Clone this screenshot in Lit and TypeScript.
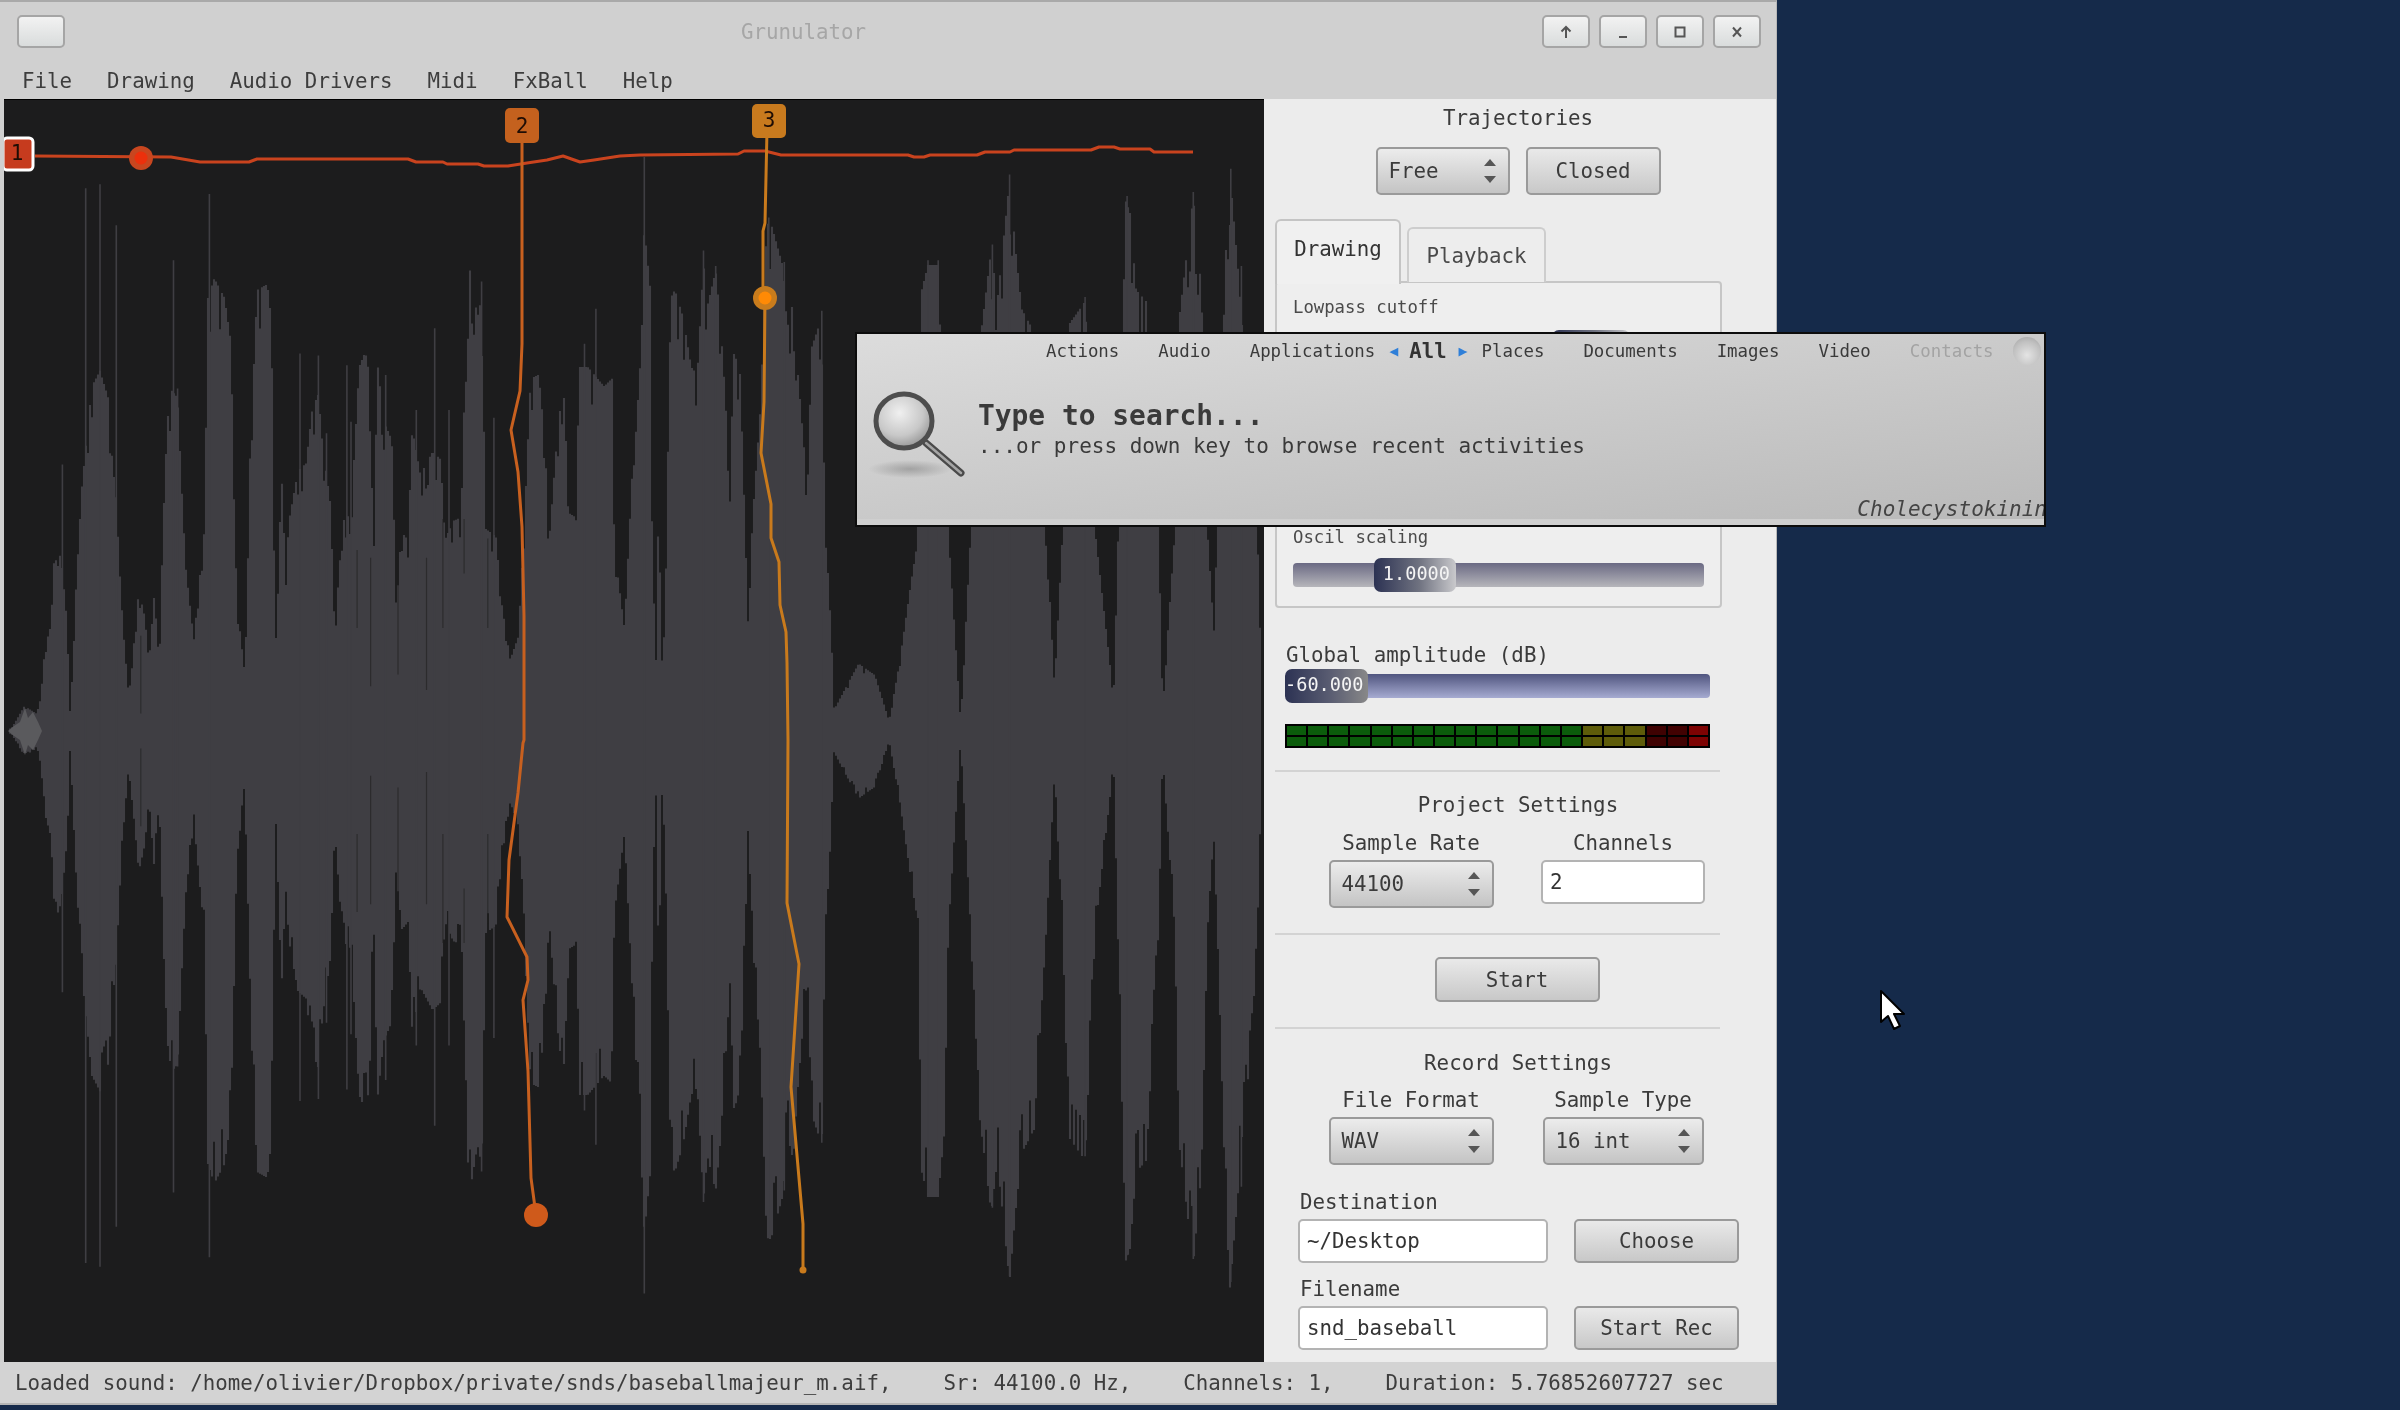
import { LitElement, html, css, svg } from "lit";
import { customElement } from "lit/decorators.js";

const ENV_A: number[][] = [[10,1545],[30,1535],[60,1480],[90,1500],[100,1460],[110,1330],[125,1270],[135,1050],[150,1100],[165,1270],[172,1510],[185,1200],[200,920],[225,650],[245,610],[265,680],[275,840],[290,1000],[300,1260],[315,1450],[330,1300],[340,1180],[355,1250],[365,1370],[378,1190],[390,1370],[400,1000],[410,740],[420,660],[435,680],[445,910],[455,1120],[475,1310],[490,1140],[503,1000],[507,430],[525,370],[550,420],[565,530],[572,820],[580,1210],[600,1400],[612,850],[630,400],[655,385],[665,480],[670,920],[675,1340],[690,880],[700,1140],[708,1000],[730,870],[750,850],[765,710],[780,670],[790,800],[810,960],[820,1290],[840,1000],[860,980],[880,600],[895,560],[905,620],[915,1080],[925,590],[940,740],[960,790],[970,1180],[985,1030],[1000,1050],[1010,760],[1030,880],[1060,820],[1080,840],[1090,1050],[1110,1000],[1130,990],[1140,590],[1150,340],[1170,470],[1180,420],[1190,1020],[1215,1040],[1230,1220],[1250,1360],[1270,1300],[1285,1000],[1300,630],[1320,620],[1335,790],[1345,1060],[1365,780],[1380,640],[1395,980],[1410,990],[1420,600],[1440,600],[1480,650],[1500,630],[1505,1070],[1530,1280],[1555,750]];
const ENV_B: number[][] = [[25,500],[35,240],[50,400],[55,1100],[65,1400],[70,900],[80,1450],[90,1000],[100,420],[110,400],[130,470],[150,600],[165,620],[180,330],[190,440],[210,350],[220,460],[230,620],[245,890],[255,560],[270,620],[290,1290],[300,1000],[320,700],[335,230],[345,225],[375,340],[385,500],[400,430],[410,600],[435,920],[445,550],[470,470],[478,1040],[490,1200],[500,1490],[530,1430],[560,1370],[600,1400],[635,1520],[660,1370],[690,1150],[705,1050],[715,400],[730,335],[755,335],[770,500],[780,1030],[810,1520],[835,1030],[850,600],[885,295],[900,430],[930,115],[945,300],[960,450],[990,510],[1020,1030],[1040,1430],[1060,1030],[1075,490],[1115,430],[1140,1030],[1185,1460],[1195,1030],[1215,170],[1225,200],[1240,400],[1265,430],[1295,1030],[1305,1480],[1335,1030],[1345,480],[1380,160],[1400,400],[1415,1030],[1430,1280],[1440,1000],[1460,300],[1470,100],[1490,350],[1500,500],[1530,800],[1545,1300]];
const SPIKES_A: number[][] = [[210,150],[245,140],[285,245],[153,860],[425,335],[435,665],[513,165],[735,575],[780,580],[850,605],[1065,510],[1100,720],[1460,460],[1432,550],[1020,720],[800,780],[945,630],[1180,390],[860,750],[1210,740]];
const SPIKES_B: number[][] = [[35,70],[180,310],[210,350],[340,225],[378,340],[470,465],[730,335],[755,335],[888,295],[930,115],[1115,430],[1218,170],[1380,160],[1472,100],[1498,350]];
const NOTCHES_A: number[][] = [[908,1100,1430],[975,1100,1400],[1045,1100,1440],[875,1080,1280],[1195,1050,1280],[1137,1000,1140],[1085,1000,1280],[345,1300,1500]];

const envelope = [
  ...ENV_A.map(([x, y]) => [x / 2.45, (1545 - y) / 2.57]),
  ...ENV_B.map(([x, y]) => [630 + x / 2.45, (1545 - y) / 2.57]),
].sort((a, b) => a[0] - b[0]);

function ampAt(x: number): number {
  for (let i = 1; i < envelope.length; i++) {
    const [x0, a0] = envelope[i - 1];
    const [x1, a1] = envelope[i];
    if (x <= x1) return a0 + ((a1 - a0) * (x - x0)) / Math.max(x1 - x0, 0.01);
  }
  return 0;
}

function wavePaths() {
  let seed = 71;
  const rnd = () => ((seed = (seed * 1103515 + 12345) % 2147483647) / 2147483647);
  const cy = 731;
  let body = "";
  for (let x = 10; x < 1264; x += 2) {
    const a = ampAt(x);
    const t = a * (rnd() < 0.25 ? 0.9 : 0.99);
    const b = a * (rnd() < 0.25 ? 0.9 : 0.99);
    body += `M${x} ${(cy - t).toFixed(1)}V${(cy + b).toFixed(1)}`;
  }
  let spikes = "";
  const add = (x: number, y: number) => {
    const a = (1545 - y) / 2.57;
    spikes += `M${x.toFixed(1)} ${(cy - a).toFixed(1)}V${(cy + a * 0.98).toFixed(1)}`;
  };
  SPIKES_A.forEach(([x, y]) => add(x / 2.45, y));
  SPIKES_B.forEach(([x, y]) => add(630 + x / 2.45, y));
  let notches = "";
  NOTCHES_A.forEach(([x, y0, y1]) => {
    const px = x / 2.45;
    const a0 = (1545 - y0) / 2.57;
    const a1 = (1545 - y1) / 2.57;
    notches += `M${px.toFixed(1)} ${(cy - a0).toFixed(1)}V${(cy - a1).toFixed(1)}M${px.toFixed(1)} ${(cy + a1).toFixed(1)}V${(cy + a0).toFixed(1)}`;
  });
  return { body, spikes, notches };
}

const LINE1 = "35,156 171,157 200,162 249,162 257,159 408,159 416,162 443,162 447,164 478,164 484,166 508,166 527,163 547,160 563,156 580,162 594,160 620,156 640,155 738,154 744,151 765,151 781,155 908,155 914,157 924,157 930,155 977,155 985,152 1010,152 1014,150 1091,150 1099,147 1114,147 1120,149 1150,149 1154,152 1193,152";
const LINE2 = "522,130 522,344 520,391 511,430 518,472 522,527 524,616 524,740 523,743 518,793 509,860 507,917 527,957 528,980 523,1000 528,1071 531,1178 536,1215";
const LINE3 = "767,130 765,223 763,231 763,286 765,297 764,402 761,453 771,504 771,538 779,562 780,605 786,632 787,663 788,740 787,903 799,964 791,1087 803,1224 803,1270";

const arrows = svg`<svg class="arrows" viewBox="0 0 14 28" width="14" height="28"><path d="M7 2 13 9H1Z"/><path d="M7 26 1 19H13Z"/></svg>`;

@customElement("app-root")
export class AppRoot extends LitElement {
  static styles = css`
    :host { display: block; position: relative; width: 2400px; height: 1410px; overflow: hidden; background: #152a4a; font-family: "DejaVu Sans Mono", "Liberation Mono", monospace; font-size: 20.8px; color: #3b3b3b; }
    .window { width: 1777px; height: 1405px; display: flex; flex-direction: column; background: #d0d0d0; box-sizing: border-box; border-top: 2px solid #a9a9a9; border-right: 1px solid #b8b8b8; filter: blur(0.45px); }
    .titlebar { height: 61px; flex: none; display: flex; align-items: flex-start; padding: 13px 15px 0 17px; box-sizing: border-box; }
    .tbtn { width: 48px; height: 33px; box-sizing: border-box; border: 2px solid #a5a5a5; border-radius: 5px; background: linear-gradient(#f2f2f2, #d9dcdc); display: flex; align-items: center; justify-content: center; flex: none; }
    .tbtn svg { fill: none; stroke: #555; stroke-width: 2; }
    .title { flex: 1; text-align: center; color: #a6a6a6; line-height: 34px; font-size: 20.8px; }
    .tbtns { display: flex; gap: 9px; }
    .menu { height: 36px; flex: none; display: flex; gap: 35px; padding-left: 22px; align-items: center; color: #3d3d3d; }
    .main { flex: 1; display: flex; min-height: 0; padding-left: 4px; }
    .canvas { width: 1260px; height: 1263px; background: #1c1c1d; flex: none; border-top: 0; box-shadow: inset 0 1px 0 #000; }
    .canvas svg { display: block; }
    .body-w { fill: none; stroke: #3f3e43; stroke-width: 2.1; }
    .spike-w { fill: none; stroke: #3f3e43; stroke-width: 1.6; }
    .notch-w { fill: none; stroke: #1f1f20; stroke-width: 1.2; opacity: .6; }
    .start-w { fill: #5a5a5d; }
    .traj { fill: none; stroke-width: 3; stroke-linejoin: round; }
    .h-text { font-family: "DejaVu Sans Mono", monospace; font-size: 21px; fill: #1f0d05; text-anchor: middle; }
    .panel { flex: 1; background: #ececec; padding-right: 4px; }
    .center { text-align: center; height: 24px; line-height: 24px; }
    .h-first { height: 38px; line-height: 38px; }
    .row-c { display: flex; justify-content: center; gap: 16px; margin-top: 10px; }
    .combo { height: 48px; box-sizing: border-box; border: 2px solid #9a9a9a; border-radius: 5px; background: linear-gradient(#ececec, #c4c4c4); display: flex; align-items: center; justify-content: space-between; padding: 0 11px; flex: none; }
    .arrows { fill: #565656; }
    .btn { height: 48px; box-sizing: border-box; border: 2px solid #9a9a9a; border-radius: 5px; background: linear-gradient(#e9e9e9, #c8c8c8); display: flex; align-items: center; justify-content: center; flex: none; }
    .tabs { display: flex; align-items: flex-end; gap: 6px; margin: 24px 0 0 11px; height: 63px; position: relative; z-index: 1; }
    .tab { box-sizing: border-box; border: 2px solid #cdcdcd; border-bottom: none; border-radius: 6px 6px 0 0; display: flex; justify-content: center; align-items: center; }
    .tab.on { width: 126px; height: 63px; background: #f0f0f0; padding-bottom: 8px; color: #333; border-color: #c4c4c4; margin-bottom: -2px; height: 65px; }
    .tab.off { width: 139px; height: 55px; background: #ededed; color: #4a4a4a; }
    .box { width: 447px; height: 327px; box-sizing: border-box; margin: -1px 0 0 11px; border: 2px solid #c6c6c6; border-radius: 4px; padding: 13px 16px 0; background: #eee; }
    .small { font-size: 17.3px; line-height: 22px; height: 22px; color: #4a4a4a; }
    .slider { position: relative; height: 34px; }
    .track { height: 24px; margin-top: 5px; box-sizing: border-box; border-radius: 4px; position: absolute; left: 0; right: 0; background: linear-gradient(#6a6983, #b6b6bb); }
    .thumb { position: absolute; top: 0; height: 34px; border-radius: 7px; box-sizing: border-box; color: #f4f4f4; font-size: 18.6px; line-height: 32px; text-align: right; padding-right: 6px; white-space: nowrap; background: linear-gradient(90deg, #2c3253, #6f7280 55%, #c9c9cc); }
    .s-low { margin-top: 12px; }
    .covered { height: 162px; }
    .s-osc { margin-top: 10px; }
    .amp-label { margin: 36px 0 0 22px; height: 22px; line-height: 22px; }
    .amp { margin: 3px 0 0 21px; width: 425px; }
    .amp .track { background: linear-gradient(#50557f, #a6abd1); }
    .amp .thumb { background: linear-gradient(90deg, #2c3253, #5a5d72 55%, #888); padding-right: 5px; }
    .vu { margin: 21px 0 0 21px; width: 425px; height: 24px; box-sizing: border-box; background: #000; padding: 2px; display: grid; grid-template-columns: repeat(20, 1fr); gap: 2px; }
    .seg { background: linear-gradient(var(--c) 46%, #000 46%, #000 54%, var(--c) 54%); }
    .sep { width: 445px; height: 2px; margin-left: 11px; background: #d3d3d3; }
    .m21 { margin-top: 21px; }
    .cols { display: flex; margin: 15px 0 0 41px; width: 424px; }
    .col { width: 212px; display: flex; flex-direction: column; align-items: center; }
    .lab { height: 22px; line-height: 22px; white-space: nowrap; }
    .col .combo, .col .input { margin-top: 6px; }
    .input { box-sizing: border-box; height: 44px; border: 2px solid #b3b3b3; border-radius: 5px; background: #fff; color: #333; display: flex; align-items: center; padding-left: 7px; flex: none; }
    .startbtn { width: 165px; height: 45px; margin: 22px auto 25px; position: relative; left: -1px; }
    .sep-b { margin-top: 25px; }
    .dest { margin: 26px 0 0 36px; height: 22px; line-height: 22px; }
    .rowf { display: flex; gap: 26px; margin: 6px 0 0 34px; }
    .rowf .input { width: 250px; }
    .rowf .btn { width: 165px; height: 44px; }
    .fname { margin-top: 15px; }
    .status { height: 43px; flex: none; box-sizing: border-box; display: flex; gap: 52px; padding-left: 15px; align-items: center; background: #d3d3d3; border-bottom: 2px solid #b5b5b5; white-space: nowrap; color: #3d3d3d; }
    .overlay { position: absolute; left: 855px; top: 332px; width: 1191px; height: 195px; box-sizing: border-box; border: 2px solid #0c0c0c; overflow: hidden; background: linear-gradient(172deg, #dcdcdc, #cacaca 50%, #b9b9b9); box-shadow: inset 0 -6px 0 #cfcfcf; filter: blur(0.45px); color: #3a3a3a; }
    .otabs { display: flex; align-items: center; margin: 6px 0 0 189px; height: 22px; font-size: 17.4px; white-space: nowrap; }
    .otabs span { margin-right: 39px; }
    .otabs .oall { font-weight: bold; font-size: 20.6px; color: #333; margin: 0 12px 0 11px; }
    .otabs .oarrow { margin: 0 14px 0 0; color: #2f7fd8; font-size: 15px; display: flex; }
    .otabs .oleft { margin: 0 0 0 -25px; }
    .otabs .faded { color: #a3a3a3; margin: 0; }
    .orb { position: absolute; left: 1156px; top: 3px; width: 28px; height: 28px; border-radius: 50%; background: radial-gradient(circle at 50% 65%, #e4e4e4, #c0c0c0 60%, #9e9e9e); }
    .orow { display: flex; margin: 23px 0 0 11px; height: 96px; }
    .mag { flex: none; margin-right: 10px; }
    .otext { padding-top: 14px; }
    .ohead { font-weight: bold; font-size: 27.9px; line-height: 34px; white-space: nowrap; }
    .osub { font-size: 21px; line-height: 26px; white-space: nowrap; }
    .ofoot { font-style: italic; font-size: 21px; line-height: 22px; text-align: right; margin: 17px -3px 0 0; white-space: nowrap; color: #444; }
    .cursor { position: absolute; left: 1878px; top: 988px; }
  `;

  private slider(value: string, left: number, width: number, cls = "") {
    return html`<div class="slider ${cls}"><div class="track"></div><div class="thumb" style="left:${left}px;width:${width}px">${value}</div></div>`;
  }

  private combo(text: string, width: number) {
    return html`<div class="combo" style="width:${width}px"><span>${text}</span>${arrows}</div>`;
  }

  render() {
    const w = wavePaths();
    const segs = [...Array(14).fill("#0b5c0b"), ...Array(3).fill("#5e5c0a"), "#3f0202", "#420202", "#7d0303"];
    return html`
      <div class="window">
        <div class="titlebar">
          <div class="tbtn"></div>
          <div class="title">Grunulator</div>
          <div class="tbtns">
            <div class="tbtn"><svg width="16" height="16" viewBox="0 0 16 16"><path d="M8 14V3M3.500 7.500 8 3l4.500 4.500"/></svg></div>
            <div class="tbtn"><svg width="16" height="16" viewBox="0 0 16 16"><path d="M4 13H12"/></svg></div>
            <div class="tbtn"><svg width="16" height="16" viewBox="0 0 16 16"><rect x="3.500" y="3.500" width="9" height="9"/></svg></div>
            <div class="tbtn"><svg width="16" height="16" viewBox="0 0 16 16"><path d="M4 3.500 12 12.500M12 3.500 4 12.500"/></svg></div>
          </div>
        </div>
        <div class="menu"><span>File</span><span>Drawing</span><span>Audio Drivers</span><span>Midi</span><span>FxBall</span><span>Help</span></div>
        <div class="main">
          <div class="canvas">
            <svg width="1260" height="1263" viewBox="4 99 1260 1263">
              <path class="body-w" d=${w.body}></path>
              <path class="spike-w" d=${w.spikes}></path>
              <path class="notch-w" d=${w.notches}></path>
              <path class="start-w" d="M8 731 14 726 20 722 25 708 28 718 33 712 38 722 42 731 38 740 33 750 28 745 25 755 20 740 14 736Z"></path>
              <polyline class="traj" stroke="#c9431e" points=${LINE1}></polyline>
              <polyline class="traj" stroke="#c8601f" points=${LINE2}></polyline>
              <polyline class="traj" stroke="#c97a1c" points=${LINE3}></polyline>
              <circle cx="141" cy="158" r="12" fill="#c8461f"></circle><circle cx="141" cy="158" r="6.500" fill="#ec300c"></circle>
              <circle cx="536" cy="1215" r="12" fill="#cf5a1b"></circle>
              <circle cx="765" cy="298" r="12" fill="#c97c1c"></circle><circle cx="765" cy="298" r="6.500" fill="#ff8a05"></circle>
              <circle cx="803" cy="1270" r="3.500" fill="#c97a1c"></circle>
              <rect x="3" y="138" width="30" height="32" rx="4" fill="#c63b1e" stroke="#fff" stroke-width="3"></rect>
              <text class="h-text" x="17" y="160">1</text>
              <rect x="505" y="108" width="34" height="35" rx="5" fill="#c4611e"></rect>
              <text class="h-text" x="522" y="133">2</text>
              <rect x="752" y="104" width="34" height="34" rx="5" fill="#c87a1e"></rect>
              <text class="h-text" x="769" y="127">3</text>
            </svg>
          </div>
          <div class="panel">
            <div class="center h-first">Trajectories</div>
            <div class="row-c">${this.combo("Free", 134)}<div class="btn" style="width:135px">Closed</div></div>
            <div class="tabs"><div class="tab on">Drawing</div><div class="tab off">Playback</div></div>
            <div class="box">
              <div class="small">Lowpass cutoff</div>
              ${this.slider("", 259, 78, "s-low")}
              <div class="covered"></div>
              <div class="small">Oscil scaling</div>
              ${this.slider("1.0000", 81, 82, "s-osc")}
            </div>
            <div class="amp-label">Global amplitude (dB)</div>
            <div class="amp">${this.slider("-60.000", 0, 83)}</div>
            <div class="vu">${segs.map((c) => html`<div class="seg" style="--c:${c}"></div>`)}</div>
            <div class="sep" style="margin-top:22px"></div>
            <div class="center m21">Project Settings</div>
            <div class="cols">
              <div class="col"><div class="lab">Sample Rate</div>${this.combo("44100", 165)}</div>
              <div class="col"><div class="lab">Channels</div><div class="input" style="width:164px">2</div></div>
            </div>
            <div class="sep sep-b"></div>
            <div class="btn startbtn">Start</div>
            <div class="sep"></div>
            <div class="center" style="margin-top:22px">Record Settings</div>
            <div class="cols" style="margin-top:14px">
              <div class="col"><div class="lab">File Format</div>${this.combo("WAV", 165)}</div>
              <div class="col"><div class="lab">Sample Type</div>${this.combo("16 int", 161)}</div>
            </div>
            <div class="dest">Destination</div>
            <div class="rowf"><div class="input">~/Desktop</div><div class="btn">Choose</div></div>
            <div class="dest fname">Filename</div>
            <div class="rowf"><div class="input">snd_baseball</div><div class="btn">Start Rec</div></div>
          </div>
        </div>
        <div class="status">
          <span>Loaded sound: /home/olivier/Dropbox/private/snds/baseballmajeur_m.aif,</span>
          <span>Sr: 44100.0 Hz,</span>
          <span>Channels: 1,</span>
          <span>Duration: 5.76852607727 sec</span>
        </div>
      </div>
      <div class="overlay">
        <div class="otabs">
          <span>Actions</span><span>Audio</span><span>Applications</span>
          <span class="oarrow oleft">◀</span><span class="oall">All</span><span class="oarrow">▶</span>
          <span>Places</span><span>Documents</span><span>Images</span><span>Video</span><span class="faded">Contacts</span>
        </div>
        <div class="orb"></div>
        <div class="orow">
          <svg class="mag" width="100" height="96" viewBox="0 0 100 96">
            <defs><radialGradient id="g" cx=".42" cy=".35" r=".7"><stop offset="0" stop-color="#f0f0f0"></stop><stop offset=".6" stop-color="#c8c8c8"></stop><stop offset="1" stop-color="#8f8f8f"></stop></radialGradient>
            <radialGradient id="sh"><stop offset="0" stop-color="#8f8f8f" stop-opacity=".7"></stop><stop offset="1" stop-color="#8f8f8f" stop-opacity="0"></stop></radialGradient></defs>
            <ellipse cx="42" cy="84" rx="42" ry="9" fill="url(#sh)"></ellipse>
            <path d="M58 58 93 88" stroke="#4a4a4a" stroke-width="7" stroke-linecap="round"></path>
            <path d="M58 58 93 88" stroke="#a5a5a5" stroke-width="2.500" stroke-linecap="round"></path>
            <ellipse cx="36" cy="36" rx="28" ry="27" fill="url(#g)" stroke="#4d4d4d" stroke-width="5"></ellipse>
          </svg>
          <div class="otext">
            <div class="ohead">Type to search...</div>
            <div class="osub">...or press down key to browse recent activities</div>
          </div>
        </div>
        <div class="ofoot">Cholecystokinin</div>
      </div>
      <svg class="cursor" width="32" height="46" viewBox="0 0 32 46"><path d="M3 3V34L10 28 16 41 22 38 16 26H26Z" fill="#fff" stroke="#000" stroke-width="2" stroke-linejoin="round"></path></svg>
    `;
  }
}
